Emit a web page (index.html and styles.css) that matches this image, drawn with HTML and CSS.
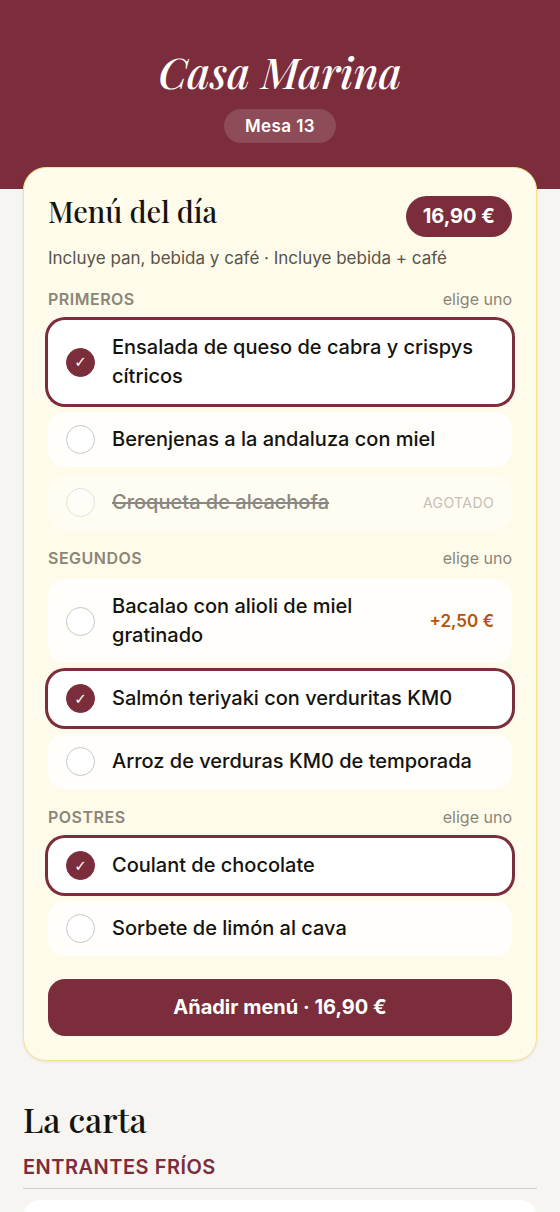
FILE: index.html
```html
<!DOCTYPE html>
<html lang="es">
<head>
<meta charset="utf-8">
<meta name="viewport" content="width=device-width, initial-scale=1">
<title>Casa Marina</title>
<link rel="stylesheet" href="styles.css">
</head>
<body>
<header class="hero">
  <h1 class="brand">Casa Marina</h1>
  <span class="table-badge">Mesa 13</span>
</header>
<main class="content">
  <form class="menu-card">
    <div class="menu-head">
      <h2 class="menu-title">Menú del día</h2>
      <span class="menu-price">16,90 €</span>
    </div>
    <p class="menu-note">Incluye pan, bebida y café · Incluye bebida + café</p>

    <section class="course" role="radiogroup" aria-labelledby="primeros">
      <div class="course-head"><h3 class="course-name" id="primeros">Primeros</h3><span class="course-hint">elige uno</span></div>
      <label class="option"><input class="option-radio" type="radio" name="primero" checked><span class="option-name">Ensalada de queso de cabra y crispys cítricos</span></label>
      <label class="option"><input class="option-radio" type="radio" name="primero"><span class="option-name">Berenjenas a la andaluza con miel</span></label>
      <label class="option option-out"><input class="option-radio" type="radio" name="primero" disabled><span class="option-name">Croqueta de alcachofa</span><span class="option-status">Agotado</span></label>
    </section>

    <section class="course" role="radiogroup" aria-labelledby="segundos">
      <div class="course-head"><h3 class="course-name" id="segundos">Segundos</h3><span class="course-hint">elige uno</span></div>
      <label class="option"><input class="option-radio" type="radio" name="segundo"><span class="option-name">Bacalao con alioli de miel gratinado</span><span class="option-extra">+2,50 €</span></label>
      <label class="option"><input class="option-radio" type="radio" name="segundo" checked><span class="option-name">Salmón teriyaki con verduritas KM0</span></label>
      <label class="option"><input class="option-radio" type="radio" name="segundo"><span class="option-name">Arroz de verduras KM0 de temporada</span></label>
    </section>

    <section class="course" role="radiogroup" aria-labelledby="postres">
      <div class="course-head"><h3 class="course-name" id="postres">Postres</h3><span class="course-hint">elige uno</span></div>
      <label class="option"><input class="option-radio" type="radio" name="postre" checked><span class="option-name">Coulant de chocolate</span></label>
      <label class="option"><input class="option-radio" type="radio" name="postre"><span class="option-name">Sorbete de limón al cava</span></label>
    </section>

    <button class="add-button" type="button">Añadir menú · 16,90 €</button>
  </form>

  <h2 class="carta-title">La carta</h2>
  <h3 class="carta-section">Entrantes fríos</h3>
  <div class="dish-list"><div class="dish"></div></div>
</main>
</body>
</html>
```
FILE: styles.css
```css
:root {
  --wine: #7b2d3b;
  --ink: #14130f;
  --cream: #fffbeb;
  --serif: "Playfair Display", "Liberation Serif", serif;
}

* {
  box-sizing: border-box;
}

body {
  display: flex;
  flex-direction: column;
  min-height: 100vh;
  margin: 0;
  background: #f6f5f2;
  color: var(--ink);
  font-family: Inter, "Liberation Sans", sans-serif;
  font-size: 20px;
  line-height: 29px;
}

h1, h2, h3, p {
  margin: 0;
}

.hero {
  display: flex;
  flex-direction: column;
  align-items: center;
  gap: 11px;
  padding: 44px 24px 46px;
  background: var(--wine);
  color: #fff;
}

.brand {
  font: italic 500 43px/54px var(--serif);
}

.table-badge {
  padding: 5px 21px;
  border-radius: 17px;
  background: rgba(255, 255, 255, 0.15);
  font-size: 17px;
  font-weight: 600;
  line-height: 24px;
  letter-spacing: 0.4px;
}

.content {
  display: flex;
  flex: 1;
  flex-direction: column;
  margin-top: -22px;
  padding: 0 23px;
}

.menu-card {
  padding: 23px 24px 24px;
  border: 1px solid #f8e08e;
  border-radius: 23px;
  background: var(--cream);
  box-shadow: 0 1px 3px rgba(0, 0, 0, 0.08);
}

.menu-head {
  display: flex;
  align-items: baseline;
  justify-content: space-between;
}

.menu-title {
  font: 500 29px/40px var(--serif);
}

.menu-price {
  padding: 6px 17px;
  border-radius: 21px;
  background: var(--wine);
  color: #fff;
  font-weight: 700;
}

.menu-note {
  margin-top: 9px;
  margin-bottom: 17px;
  color: #57534a;
  font-size: 17px;
  line-height: 24px;
}

.course {
  display: flex;
  flex-direction: column;
  gap: 8px;
  margin-top: 16px;
}

.course-head {
  display: flex;
  align-items: baseline;
  justify-content: space-between;
  padding-bottom: 1px;
  color: #8a8677;
  font-size: 16px;
  line-height: 24px;
}

.course-name {
  font-size: 16px;
  font-weight: 600;
  letter-spacing: 0.5px;
  text-transform: uppercase;
}

.option {
  display: flex;
  align-items: center;
  gap: 17px;
  padding: 13px 18px;
  border-radius: 17px;
  background: rgba(255, 255, 255, 0.75);
}

.option:has(:checked) {
  background: #fff;
  box-shadow: 0 0 0 3px var(--wine);
}

.option-radio {
  display: grid;
  flex: none;
  place-items: center;
  width: 29px;
  height: 29px;
  margin: 0;
  appearance: none;
  border: 1px solid #c9c7c3;
  border-radius: 50%;
  background: #fff;
}

.option-radio:checked {
  border-color: var(--wine);
  background: var(--wine);
}

.option-radio:checked::before {
  content: "✓";
  color: #fff;
  font: 15px/20px "DejaVu Sans", sans-serif;
}

.option-name {
  flex: 1;
  font-weight: 500;
}

.option-extra {
  color: #b45309;
  font-size: 17px;
  font-weight: 600;
}

.option-out {
  background: rgba(255, 255, 255, 0.3);
}

.option-out .option-radio {
  opacity: 0.5;
}

.option-out .option-name {
  color: #898780;
  text-decoration: line-through;
}

.option-status {
  color: #c3c0b5;
  font-size: 14px;
  letter-spacing: 0.4px;
  text-transform: uppercase;
}

.add-button {
  display: block;
  width: 100%;
  margin-top: 23px;
  padding: 14px;
  border: 0;
  border-radius: 17px;
  background: var(--wine);
  color: #fff;
  font: inherit;
  font-weight: 700;
}

.carta-title {
  margin-top: 36px;
  font: 500 34px/44px var(--serif);
}

.carta-section {
  margin-top: 14px;
  padding-bottom: 8px;
  border-bottom: 1px solid #d3cccb;
  color: var(--wine);
  font-size: 20px;
  font-weight: 600;
  line-height: 25px;
  letter-spacing: 0.5px;
  text-transform: uppercase;
}

.dish-list {
  flex: 1 1 0;
  min-height: 12px;
  margin-top: 11px;
  overflow: hidden;
}

.dish {
  height: 96px;
  border-radius: 17px;
  background: #fff;
}
```
